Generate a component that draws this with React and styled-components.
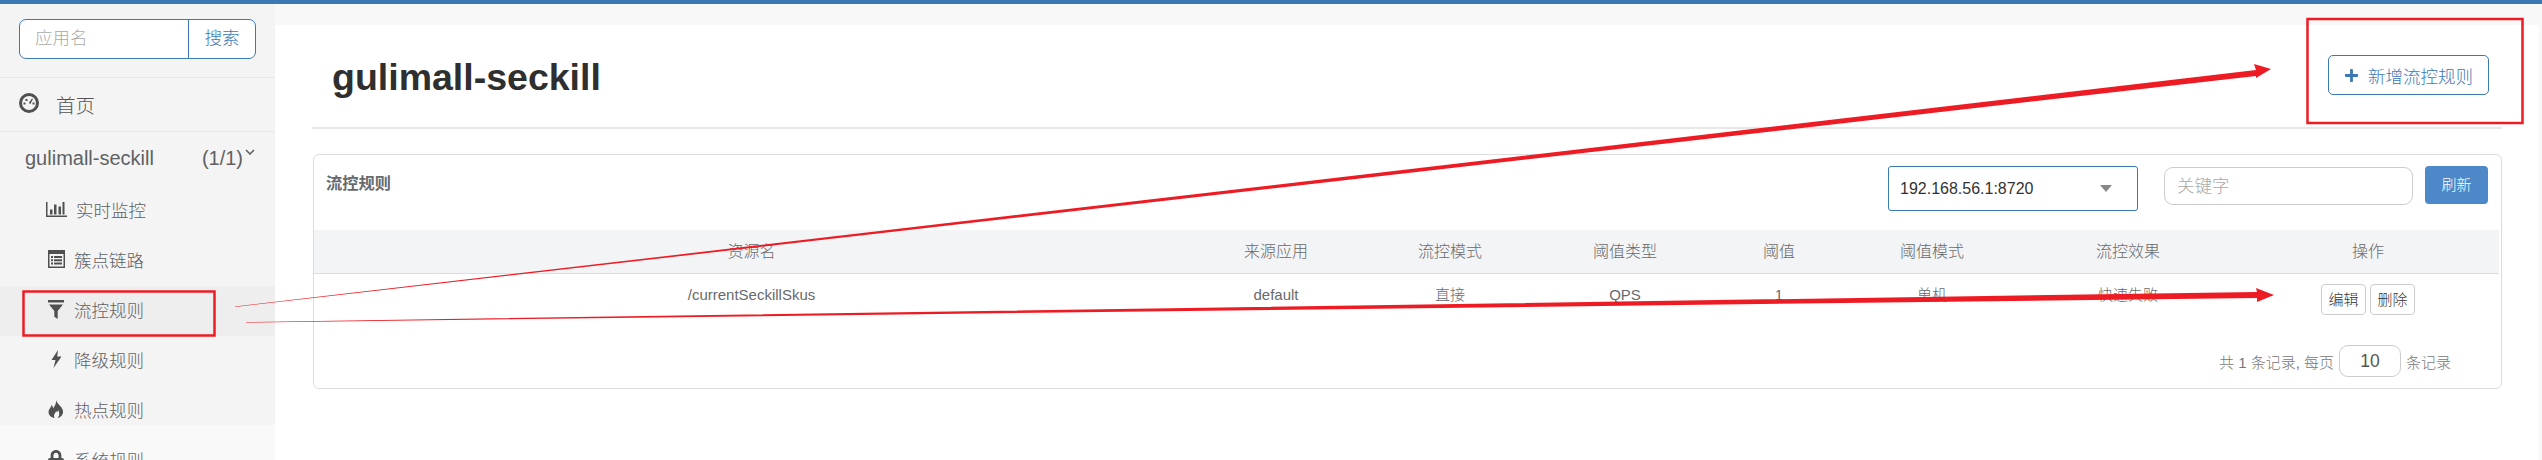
import styled, { createGlobalStyle } from "styled-components";
import { FaLock, FaPlus } from "react-icons/fa";

const GlobalStyle = createGlobalStyle`
  html, body {
    margin: 0;
    padding: 0;
    height: 460px;
    overflow: hidden;
    background: #fff;
    font-family: "Liberation Sans", "Noto Sans CJK SC", sans-serif;
    color: #676a6c;
  }
  * { box-sizing: border-box; }
`;

const Page = styled.div`
  position: relative;
  width: 2542px;
  height: 460px;
  overflow: hidden;
  border-top: 4px solid #3c78b4;
  display: flex;
`;

const Sidebar = styled.aside`
  width: 275px;
  height: 456px;
  overflow: hidden;
  flex-shrink: 0;
  background: linear-gradient(#f4f4f4 421px, #f9f9f9 421px);
`;

const SearchWrap = styled.div`
  height: 74px;
  padding: 15px 19px 0;
  border-bottom: 1px solid #e7e7e7;
`;

const SearchBox = styled.div`
  width: 237px;
  height: 40px;
  display: flex;
  background: #fff;
  border: 1px solid #3c78b4;
  border-radius: 7px;
  overflow: hidden;
`;

const SearchInput = styled.div`
  flex: 1;
  padding-left: 15px;
  line-height: 36px;
  font-size: 17.5px;
  color: #a9a9a9;
  font-weight: 300;
`;

const SearchButton = styled.div`
  width: 67px;
  border-left: 1px solid #3c78b4;
  text-align: center;
  line-height: 36px;
  font-size: 17.5px;
  color: #3c78b4;
  font-weight: 300;
`;

const HomeRow = styled.div`
  height: 54px;
  display: flex;
  align-items: center;
  padding-left: 19px;
  border-bottom: 1px solid #e7e7e7;
  font-size: 19.5px;
  font-weight: 300;
  color: #555;
  svg {
    width: 20px;
    height: 20px;
    margin: -4px 17px 0 0;
  }
`;

const AppRow = styled.div`
  height: 54px;
  display: flex;
  align-items: center;
  padding: 0 20px 2px 25px;
  font-size: 20px;
  color: #5f6163;
`;

const AppName = styled.span`
  flex: 1;
`;

const Caret = styled.svg`
  width: 10px;
  height: 6px;
  margin: -12px 0 0 2px;
`;

const NavItem = styled.div`
  height: 50px;
  display: flex;
  align-items: center;
  padding: 0 0 4px 46px;
  font-size: 17.5px;
  font-weight: 300;
  color: #5f6163;
  background: ${(props) => (props.$active ? "#eeeeee" : "transparent")};
`;

const NavIcon = styled.span`
  width: ${(props) => (props.$wide ? "30px" : "28px")};
  padding-right: ${(props) => (props.$wide ? "9px" : "8px")};
  display: flex;
  justify-content: center;
  color: #4f5050;
`;

const Main = styled.main`
  flex: 1;
  background: #f8f8f8;
  padding: 21px 3px 0 0;
`;

const Content = styled.div`
  height: 435px;
  background: #fff;
  padding: 0 37px;
`;

const Header = styled.div`
  height: 104px;
  display: flex;
  align-items: center;
  justify-content: space-between;
  border-bottom: 2px solid #e7e7e7;
  padding-left: 20px;
`;

const Title = styled.h1`
  margin: 3px 0 0;
  font-size: 37.5px;
  font-weight: 700;
  color: #2f2f2f;
`;

const AddButton = styled.div`
  width: 161px;
  height: 40px;
  margin: -2px 13px 0 0;
  display: flex;
  align-items: center;
  padding-left: 15px;
  background: #fff;
  border: 1px solid #3c78b4;
  border-radius: 5px;
  font-size: 17.5px;
  font-weight: 300;
  color: #3c78b4;
  svg {
    width: 15px;
    height: 15px;
    margin-right: 9px;
  }
`;

const Panel = styled.section`
  margin: 25px 0 0 1px;
  height: 235px;
  border: 1px solid #dcdcdc;
  border-radius: 6px;
  background: #fff;
`;

const PanelHead = styled.div`
  height: 75px;
  display: flex;
  padding: 11px 13px 0 12px;
`;

const PanelTitle = styled.h3`
  flex: 1;
  margin: 4px 0 0;
  font-size: 16.25px;
  font-weight: 700;
  color: #676a6c;
`;

const SelectBox = styled.div`
  width: 250px;
  height: 45px;
  display: flex;
  align-items: center;
  justify-content: space-between;
  padding: 0 25px 0 11px;
  border: 1px solid #3c78b4;
  border-radius: 3px;
  font-size: 16px;
  color: #333;
`;

const SelectCaret = styled.span`
  width: 0;
  height: 0;
  border-left: 6px solid transparent;
  border-right: 6px solid transparent;
  border-top: 7px solid #888;
`;

const KeywordInput = styled.div`
  width: 249px;
  height: 38px;
  margin: 1px 12px 0 26px;
  padding-left: 12px;
  border: 1px solid #ccc;
  border-radius: 9px;
  line-height: 36px;
  font-size: 17.5px;
  font-weight: 300;
  color: #a9a9a9;
`;

const RefreshButton = styled.div`
  width: 63px;
  height: 38px;
  border-radius: 4px;
  background: #4d88c8;
  color: #fff;
  font-size: 15px;
  font-weight: 300;
  line-height: 38px;
  text-align: center;
`;

const TableRow = styled.div`
  display: grid;
  grid-template-columns: 875px 174px 174px 176px 132px 174px 218px 1fr;
  margin-right: 2px;
  text-align: center;
  color: #676a6c;
  font-weight: 300;
`;

const HeadRow = styled(TableRow)`
  height: 44px;
  line-height: 43px;
  font-size: 16px;
  background: #f3f4f6;
  border-bottom: 1px solid #dddddd;
`;

const BodyRow = styled(TableRow)`
  height: 45px;
  line-height: 42px;
  font-size: 15px;
`;

const Ops = styled.div`
  display: flex;
  justify-content: center;
  gap: 4px;
  padding-top: 10px;
`;

const SmallButton = styled.div`
  width: 45px;
  height: 31px;
  line-height: 29px;
  border: 1px solid #ccc;
  border-radius: 4px;
  color: #333;
  font-size: 15px;
  font-weight: 300;
`;

const Pager = styled.div`
  display: flex;
  justify-content: flex-end;
  align-items: center;
  gap: 5px;
  padding: 26px 50px 0 0;
  font-size: 15px;
  font-weight: 300;
  color: #777;
`;

const PageSize = styled.div`
  width: 62px;
  height: 32px;
  line-height: 30px;
  border: 1px solid #ccc;
  border-radius: 9px;
  text-align: center;
  font-size: 17.5px;
  color: #555;
`;

const Overlay = styled.svg`
  position: absolute;
  left: 0;
  top: -4px;
  width: 2542px;
  height: 460px;
  pointer-events: none;
`;

const GaugeIcon = () => (
  <svg viewBox="0 0 20 20">
    <circle cx="10" cy="10" r="8.5" fill="none" stroke="#4f5050" strokeWidth="3" />
    <g fill="#4f5050">
      <rect x="4.5" y="9.5" width="2" height="2" />
      <rect x="6.5" y="6" width="2" height="2" />
      <rect x="13.5" y="9.5" width="2" height="2" />
      <path d="M13 5.5l1 .6-2.6 5-1.6-1z" />
    </g>
  </svg>
);

const ChartIcon = () => (
  <svg viewBox="0 0 21 15" width="21" height="15" fill="currentColor">
    <path d="M0 0h1.5v13.5H21V15H0z" />
    <rect x="4" y="7.5" width="2.5" height="5" />
    <rect x="8" y="2.5" width="2.5" height="10" />
    <rect x="12.5" y="4.5" width="2.5" height="8" />
    <rect x="16.5" y="0" width="2" height="12.5" />
  </svg>
);

const ListIcon = () => (
  <svg viewBox="0 0 17 18" width="17" height="18" fill="currentColor">
    <path
      fillRule="evenodd"
      d="M0 0h17v18H0zM1.5 4v12.5h14V4zM3 6h2v2H3zM6 6h8v2H6zM3 9.2h2v2H3zM6 9.2h8v2H6zM3 12.4h2v2H3zM6 12.4h8v2H6z"
    />
  </svg>
);

const FilterIcon = () => (
  <svg viewBox="0 0 16 19" width="16" height="19" fill="currentColor">
    <rect x="0" y="0" width="16" height="2.5" />
    <path d="M1 4.5h14L9.7 11v8l-3.4-2.2V11z" />
  </svg>
);

const BoltIcon = () => (
  <svg viewBox="0 0 11 18" width="11" height="18" fill="currentColor">
    <path d="M7 0L.5 10H4.5L2.5 18 10.5 6.5H6.2z" />
  </svg>
);

const FlameIcon = () => (
  <svg viewBox="0 0 16 18" width="16" height="18" fill="currentColor">
    <path d="M8 0C9 4 14 6 15 11 15.5 15 12 18 9.5 18 11.5 16 12 13 10 10 10 12 8.5 12.5 8 11 8 13 5 14 6.5 18 3 17.5.5 15 .5 12 .5 9 3 8 3.5 5 4.5 6 5 7 5 8.5 7 6 8.5 3 8 0z" />
  </svg>
);

const navItems = [
  { label: "实时监控", icon: <ChartIcon />, wide: true },
  { label: "簇点链路", icon: <ListIcon /> },
  { label: "流控规则", icon: <FilterIcon />, active: true },
  { label: "降级规则", icon: <BoltIcon /> },
  { label: "热点规则", icon: <FlameIcon /> },
  { label: "系统规则", icon: <FaLock size={18} /> },
];

const columns = ["资源名", "来源应用", "流控模式", "阈值类型", "阈值", "阈值模式", "流控效果", "操作"];
const row = ["/currentSeckillSkus", "default", "直接", "QPS", "1", "单机", "快速失败"];

const App = () => (
  <>
    <GlobalStyle />
    <Page>
      <Sidebar>
        <SearchWrap>
          <SearchBox>
            <SearchInput>应用名</SearchInput>
            <SearchButton>搜索</SearchButton>
          </SearchBox>
        </SearchWrap>
        <HomeRow>
          <GaugeIcon />
          首页
        </HomeRow>
        <AppRow>
          <AppName>gulimall-seckill</AppName>
          (1/1)
          <Caret viewBox="0 0 10 6">
            <polyline points="1,1 5,5 9,1" fill="none" stroke="#5f6163" strokeWidth="1.6" />
          </Caret>
        </AppRow>
        {navItems.map(({ label, icon, active, wide }) => (
          <NavItem key={label} $active={active}>
            <NavIcon $wide={wide}>{icon}</NavIcon>
            {label}
          </NavItem>
        ))}
      </Sidebar>
      <Main>
        <Content>
          <Header>
            <Title>gulimall-seckill</Title>
            <AddButton>
              <FaPlus />
              新增流控规则
            </AddButton>
          </Header>
          <Panel>
            <PanelHead>
              <PanelTitle>流控规则</PanelTitle>
              <SelectBox>
                192.168.56.1:8720
                <SelectCaret />
              </SelectBox>
              <KeywordInput>关键字</KeywordInput>
              <RefreshButton>刷新</RefreshButton>
            </PanelHead>
            <HeadRow>
              {columns.map((col) => (
                <div key={col}>{col}</div>
              ))}
            </HeadRow>
            <BodyRow>
              {row.map((cell) => (
                <div key={cell}>{cell}</div>
              ))}
              <Ops>
                <SmallButton>编辑</SmallButton>
                <SmallButton>删除</SmallButton>
              </Ops>
            </BodyRow>
            <Pager>
              共 1 条记录, 每页
              <PageSize>10</PageSize>
              条记录
            </Pager>
          </Panel>
        </Content>
      </Main>
      <Overlay viewBox="0 0 2542 460">
        <g fill="none" stroke="#ed1c24" strokeWidth="2.5">
          <rect x="23.5" y="291.5" width="191" height="44" />
          <rect x="2307.5" y="19" width="215" height="104" />
        </g>
        <g fill="#ed1c24">
          <polygon points="235,306.5 2256,70 2254,64 2271,69 2256,78 2256,76 235,307" />
          <polygon points="246,322 2257,292 2256,288 2274,295 2257,302 2257,298 246,322.5" />
        </g>
      </Overlay>
    </Page>
  </>
);

export default App;
